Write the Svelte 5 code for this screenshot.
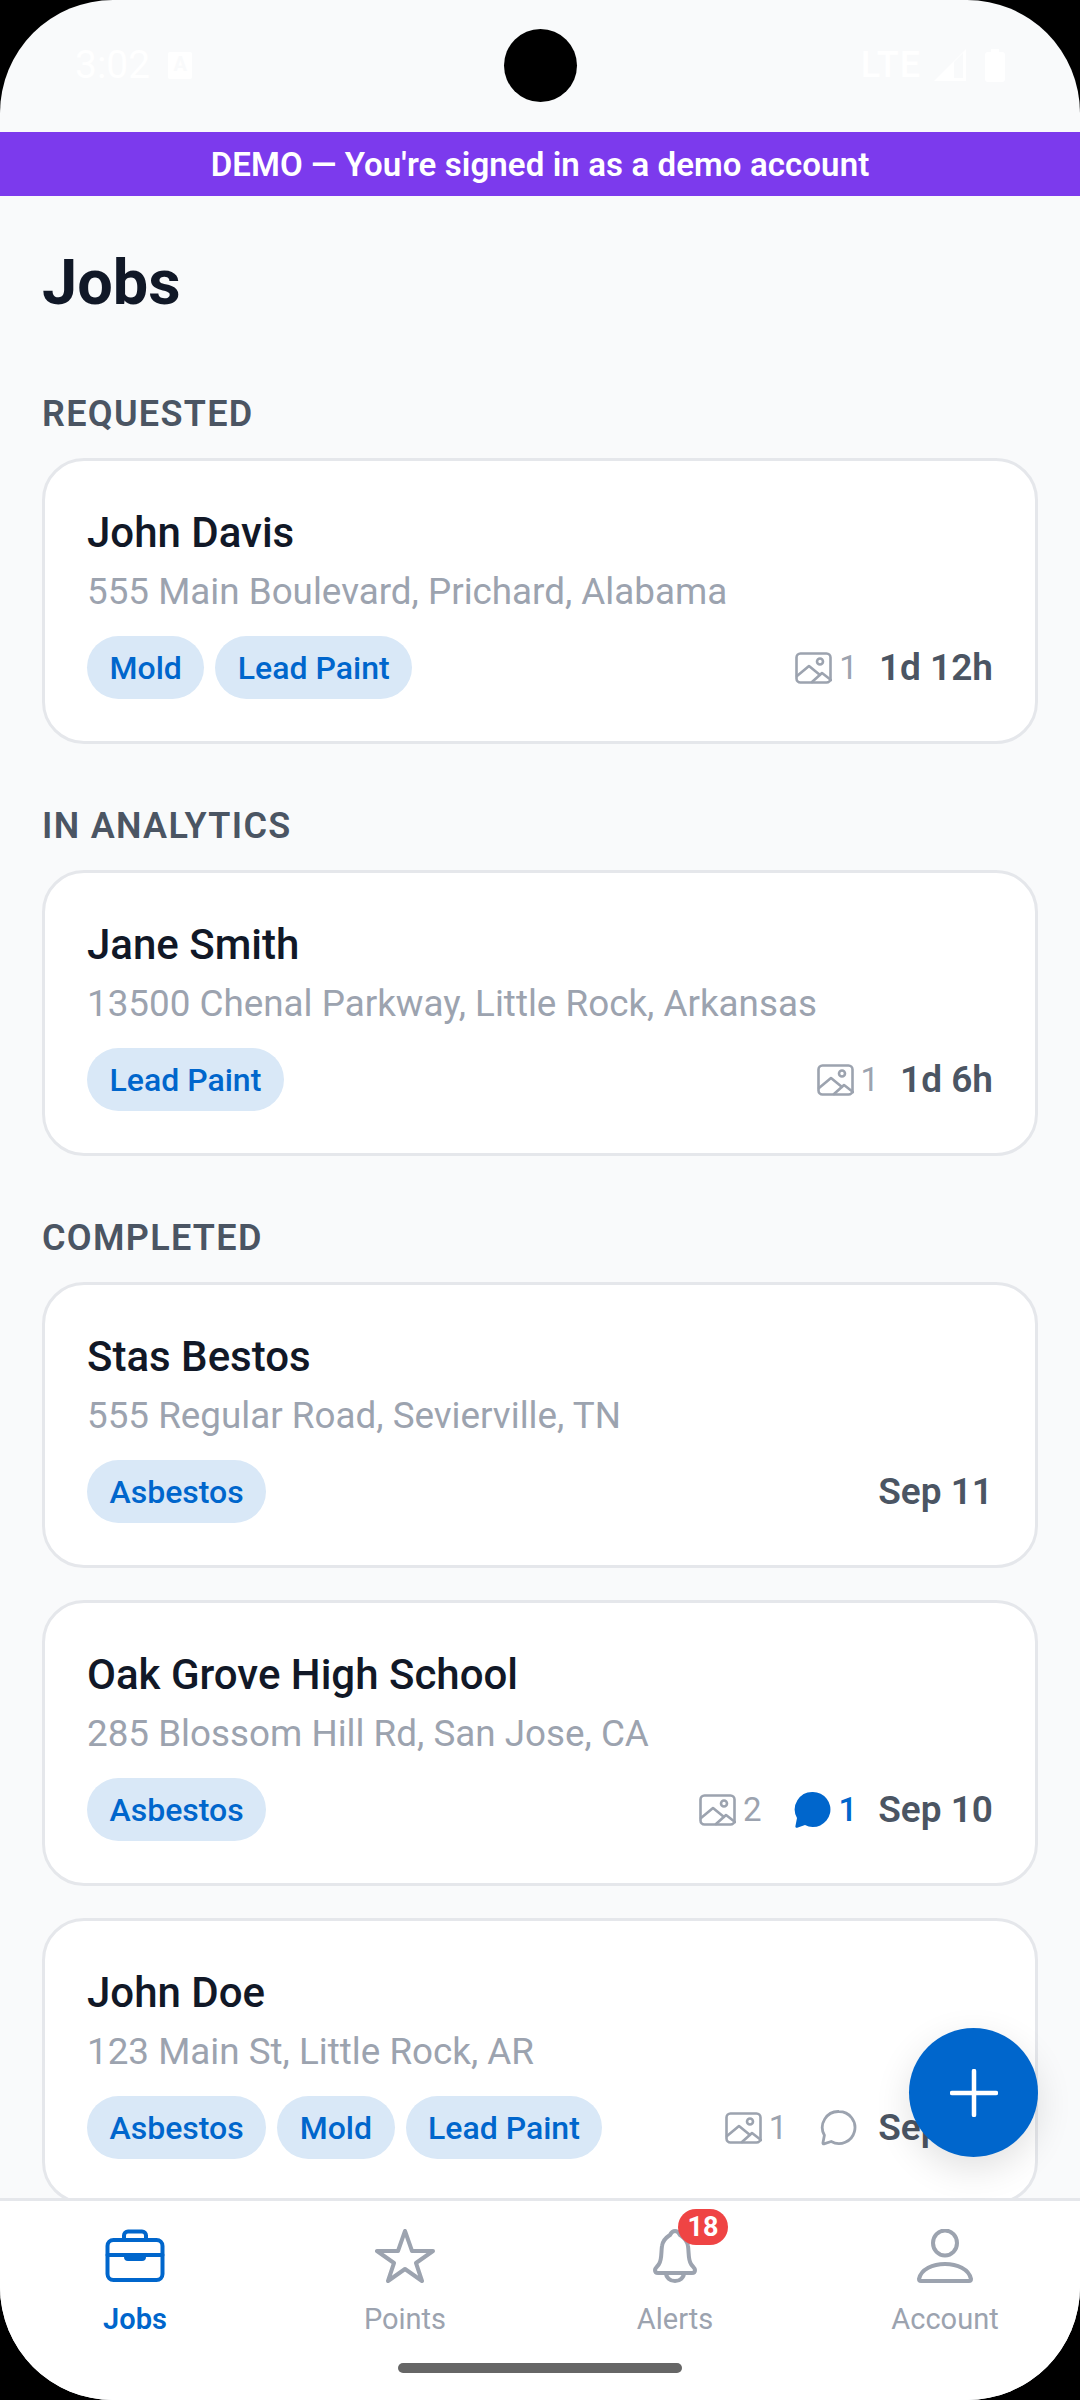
<script>
  const sections = [
    {
      title: 'REQUESTED',
      jobs: [
        { name: 'John Davis', address: '555 Main Boulevard, Prichard, Alabama', tags: ['Mold', 'Lead Paint'], photos: 1, time: '1d 12h' }
      ]
    },
    {
      title: 'IN ANALYTICS',
      jobs: [
        { name: 'Jane Smith', address: '13500 Chenal Parkway, Little Rock, Arkansas', tags: ['Lead Paint'], photos: 1, time: '1d 6h' }
      ]
    },
    {
      title: 'COMPLETED',
      jobs: [
        { name: 'Stas Bestos', address: '555 Regular Road, Sevierville, TN', tags: ['Asbestos'], time: 'Sep 11' },
        { name: 'Oak Grove High School', address: '285 Blossom Hill Rd, San Jose, CA', tags: ['Asbestos'], photos: 2, comments: 1, time: 'Sep 10' },
        { name: 'John Doe', address: '123 Main St, Little Rock, AR', tags: ['Asbestos', 'Mold', 'Lead Paint'], photos: 1, comments: 0, time: 'Sep 10' }
      ]
    }
  ]
</script>

<div class="screen">
  <div class="status">
    <div class="status-left">
      <span class="clock">3:02</span>
      <span class="a-icon">A</span>
    </div>
    <div class="status-right">
      <span class="lte">LTE</span>
      <svg width="32" height="32" viewBox="0 0 32 32"><path fill="#fff" fill-rule="evenodd" d="M32 0v32H0ZM20 13v16h9V4Z" /></svg>
      <svg class="battery" width="20" height="33" viewBox="0 0 20 33"><path fill="#fff" d="M6 0h8v3h3a3 3 0 0 1 3 3v24a3 3 0 0 1-3 3H3a3 3 0 0 1-3-3V6a3 3 0 0 1 3-3h3Z" /></svg>
    </div>
  </div>
  <div class="camera"></div>

  <div class="banner">DEMO — You're signed in as a demo account</div>

  <main class="content">
    <h1>Jobs</h1>
    {#each sections as section}
      <section>
        <h2>{section.title}</h2>
        <div class="cards">
          {#each section.jobs as job}
            <div class="card">
              <div class="name">{job.name}</div>
              <div class="address">{job.address}</div>
              <div class="card-foot">
                <div class="tags">
                  {#each job.tags as tag}
                    <span class="tag">{tag}</span>
                  {/each}
                </div>
                <div class="meta">
                  {#if job.photos}
                    <span class="meta-item">
                      <svg width="37" height="32" viewBox="0 0 37 32" fill="none" stroke="#9ca3af" stroke-width="2.6" stroke-linejoin="round" stroke-linecap="round">
                        <rect x="1.5" y="1.5" width="34" height="29" rx="4" />
                        <circle cx="25" cy="9.5" r="3" />
                        <path d="M2 24l12-10 11 9M17 30l10-9 9 7" />
                      </svg>
                      <span class="count">{job.photos}</span>
                    </span>
                  {/if}
                  {#if job.comments !== undefined}
                    <span class="meta-item comment">
                      {#if job.comments > 0}
                        <svg width="38" height="38" viewBox="0 0 38 38"><path fill="#0066cc" d="M20 1a17.500 17.500 0 1 1-8 33.100l-7.800 2.700c-1 .3-2-.5-1.800-1.500l1.600-8.300A17.500 17.500 0 0 1 20 1Z" /></svg>
                        <span class="count active">{job.comments}</span>
                      {:else}
                        <svg width="38" height="38" viewBox="0 0 38 38" fill="none" stroke="#9ca3af" stroke-width="2.8" stroke-linejoin="round"><path d="M20 2.500a16 16 0 1 1-7.800 30l-7.300 2.300c-.6.200-1.100-.3-1-.9l1.500-7.600A16 16 0 0 1 20 2.500Z" /></svg>
                      {/if}
                    </span>
                  {/if}
                  <span class="time">{job.time}</span>
                </div>
              </div>
            </div>
          {/each}
        </div>
      </section>
    {/each}
  </main>

  <button class="fab" aria-label="New job">
    <svg width="48" height="48" viewBox="0 0 48 48" stroke="#fff" stroke-width="4.500" stroke-linecap="round"><path d="M24 2v44M2 24h44" /></svg>
  </button>

  <nav class="tabs">
    <div class="tab active">
      <svg width="60" height="54" viewBox="0 0 60 54" fill="none" stroke="#0066cc" stroke-width="4" stroke-linecap="round" stroke-linejoin="round">
        <rect x="2.500" y="11" width="55" height="40" rx="6" />
        <path d="M19 11V6.500a4 4 0 0 1 4-4h14a4 4 0 0 1 4 4V11M2.500 26h55" />
        <path fill="#0066cc" stroke-width="2" d="M20 27h20v1a3 3 0 0 1-3 3H23a3 3 0 0 1-3-3Z" />
      </svg>
      <span>Jobs</span>
    </div>
    <div class="tab">
      <svg width="60" height="54" viewBox="0 0 60 54" fill="none" stroke="#9ca3af" stroke-width="4" stroke-linejoin="round">
        <path d="M30 2l7 20h21L41 34l6 18-17-12-17 12 6-18L2 22h21Z" />
      </svg>
      <span>Points</span>
    </div>
    <div class="tab">
      <div class="bell">
        <svg width="60" height="54" viewBox="0 0 60 54" fill="none" stroke="#9ca3af" stroke-width="4" stroke-linecap="round" stroke-linejoin="round">
          <path d="M30 2c-3 0-4 2-5 4-3 2-7 4-8 11-1 6 0 14-3 18-1 2-4 4-4 6 0 2 1 3 3 3h34c2 0 3-1 3-3 0-2-3-4-4-6-3-4-2-12-3-18-1-7-5-9-8-11-1-2-2-4-5-4Z" />
          <path d="M21 44a9 8 0 0 0 18 0" />
        </svg>
        <span class="badge">18</span>
      </div>
      <span>Alerts</span>
    </div>
    <div class="tab">
      <svg width="60" height="54" viewBox="0 0 60 54" fill="none" stroke="#9ca3af" stroke-width="4" stroke-linejoin="round">
        <ellipse cx="30" cy="14" rx="12" ry="12.500" />
        <path d="M6 52c-2 0-2-1-2-2 2-10 14-15 26-15s24 5 26 15c0 1 0 2-2 2Z" />
      </svg>
      <span>Account</span>
    </div>
  </nav>
  <div class="home-pill"></div>
</div>

<style>
  :global(body) { background: #000; }

  .screen {
    position: relative;
    width: 1080px;
    height: 2400px;
    display: flex;
    flex-direction: column;
    overflow: hidden;
    background: #f9fafb;
    border-radius: 113px;
    font-family: Roboto, "Liberation Sans", sans-serif;
  }

  .status {
    height: 132px;
    flex-shrink: 0;
    display: flex;
    justify-content: space-between;
    align-items: flex-start;
    padding: 48px 75px 0;
    box-sizing: border-box;
    color: #fff;
  }
  .status-left, .status-right { display: flex; align-items: center; }
  .status-left { gap: 18px; }
  .status-right { gap: 13px; }
  .clock { font-size: 39px; line-height: 34px; }
  .a-icon {
    width: 24px;
    height: 27px;
    background: #fff;
    border-radius: 2px;
    color: #f9fafb;
    font-size: 20px;
    font-weight: 700;
    line-height: 24px;
    text-align: center;
  }
  .lte { font-size: 36px; font-weight: 500; line-height: 34px; letter-spacing: 1px; }
  .battery { margin-left: 6px; }

  .camera {
    position: absolute;
    left: 504px;
    top: 29px;
    width: 73px;
    height: 73px;
    border-radius: 50%;
    background: #000;
  }

  .banner {
    height: 64px;
    flex-shrink: 0;
    background: #7c3aed;
    color: #fff;
    font-size: 33px;
    font-weight: 600;
    line-height: 66px;
    text-align: center;
    letter-spacing: 0.1px;
  }

  .content {
    flex: 1;
    min-height: 0;
    overflow: hidden;
    padding: 51px 42px 0;
  }

  h1 {
    margin: 0;
    font-size: 63px;
    line-height: 72px;
    font-weight: 700;
    color: #111827;
  }
  section { margin-top: 60px; }
  h1 + section { margin-top: 73px; }
  h2 {
    margin: 0 0 22px;
    font-size: 36px;
    line-height: 44px;
    font-weight: 600;
    letter-spacing: 1.3px;
    color: #4b5563;
  }

  .cards { display: flex; flex-direction: column; gap: 32px; }
  .card {
    height: 286px;
    box-sizing: border-box;
    padding: 45px 42px 0;
    background: #fff;
    border: 3px solid #e5e7eb;
    border-radius: 42px;
  }
  .name {
    font-size: 42px;
    line-height: 54px;
    font-weight: 500;
    color: #111827;
  }
  .address {
    margin-top: 8px;
    font-size: 36.8px;
    line-height: 48px;
    color: #9ca3af;
  }
  .card-foot {
    margin-top: 20px;
    display: flex;
    justify-content: space-between;
    align-items: center;
  }
  .tags { display: flex; gap: 11px; }
  .tag {
    height: 63px;
    padding: 0 22.5px;
    border-radius: 32px;
    background: #d9e8f7;
    color: #0066cc;
    font-size: 32px;
    font-weight: 500;
    line-height: 65px;
  }
  .meta { display: flex; align-items: center; gap: 21px; }
  .meta-item { display: flex; align-items: center; gap: 7px; }
  .comment { margin-left: 11px; }
  .count { font-size: 33px; line-height: 40px; color: #9ca3af; }
  .count.active { color: #0066cc; font-weight: 500; }
  .time { font-size: 37px; line-height: 46px; font-weight: 600; color: #4b5563; }

  .fab {
    position: absolute;
    left: 909px;
    top: 2028px;
    width: 129px;
    height: 129px;
    padding: 0;
    border: 0;
    border-radius: 50%;
    background: #0066cc;
    display: flex;
    align-items: center;
    justify-content: center;
    box-shadow: 0 12px 36px rgba(0, 0, 0, 0.12);
  }

  .tabs {
    height: 202px;
    flex-shrink: 0;
    box-sizing: border-box;
    display: grid;
    grid-template-columns: repeat(4, 1fr);
    padding-top: 28px;
    background: #fff;
    border-top: 3px solid #e5e7eb;
  }
  .tab {
    display: flex;
    flex-direction: column;
    align-items: center;
    gap: 16px;
    color: #9ca3af;
    font-size: 29px;
    line-height: 40px;
  }
  .tab.active { color: #0066cc; font-weight: 600; }
  .bell { position: relative; height: 54px; }
  .badge {
    position: absolute;
    left: 33px;
    top: -20px;
    width: 50px;
    height: 36px;
    border-radius: 18px;
    background: #ef4444;
    color: #fff;
    font-size: 27px;
    font-weight: 700;
    line-height: 36px;
    text-align: center;
  }

  .home-pill {
    position: absolute;
    left: 398px;
    bottom: 27px;
    width: 284px;
    height: 10px;
    border-radius: 5px;
    background: #666;
  }
</style>
